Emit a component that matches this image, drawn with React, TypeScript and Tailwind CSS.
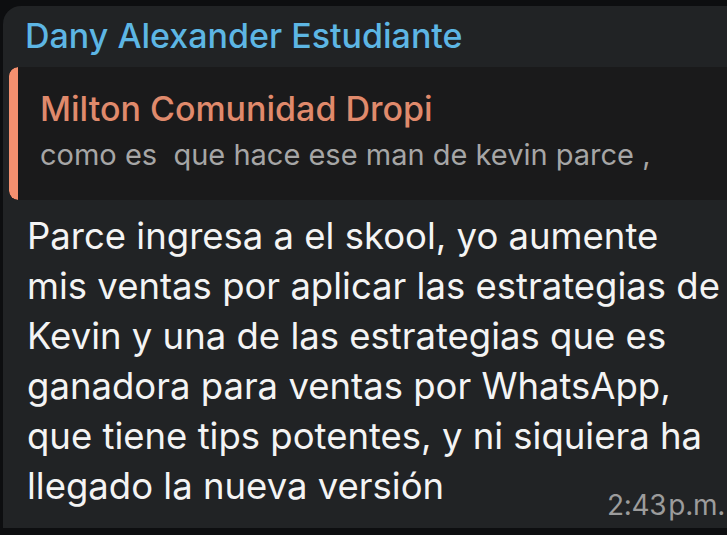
import React from "react";

const font = { fontFamily: "Inter, Roboto, 'Noto Sans', sans-serif" };

const lines = [
  "Parce ingresa a el skool, yo aumente",
  "mis ventas por aplicar las estrategias de",
  "Kevin y una de las estrategias que es",
  "ganadora para ventas por WhatsApp,",
  "que tiene tips potentes, y ni siquiera ha",
  "llegado la nueva versión",
];

export default function App() {
  return (
    <div
      className="w-[727px] h-[535px] overflow-hidden bg-[#0d0e10] pt-[6px] pl-[3px]"
      style={font}
    >
      <div className="w-[760px] h-[522px] bg-[#212325] rounded-tl-[18px] pt-[10px]">
        <div className="pl-[22px] text-[34px] leading-[40px] font-medium text-[#5db6e4]">
          Dany Alexander Estudiante
        </div>
        <div className="mt-[11px] ml-[6px] h-[133px] flex bg-[#1a1a1b] rounded-l-[9px] overflow-hidden">
          <div className="w-[9px] bg-[#f4906f] rounded-l-[9px]" />
          <div className="pl-[22px] pt-[22px]">
            <div className="text-[34px] leading-[40px] font-medium text-[#e08a6c]">
              Milton Comunidad Dropi
            </div>
            <div className="mt-[6px] text-[29px] leading-[40px] text-[#a6a6a6] whitespace-pre">
              como es  que hace ese man de kevin parce ,
            </div>
          </div>
        </div>
        <div className="relative pl-[24px] pt-[11px] text-[36.5px] leading-[50px] text-[#f4f4f4] whitespace-nowrap">
          {lines.map((l) => (
            <div key={l}>{l}</div>
          ))}
          <span className="absolute left-[604px] bottom-[-12px] text-[28px] leading-[36px] text-[#9c9c9c] tracking-[-0.3px]">
            2:43<span className="ml-[2px]">p.m.</span>
          </span>
        </div>
      </div>
    </div>
  );
}
